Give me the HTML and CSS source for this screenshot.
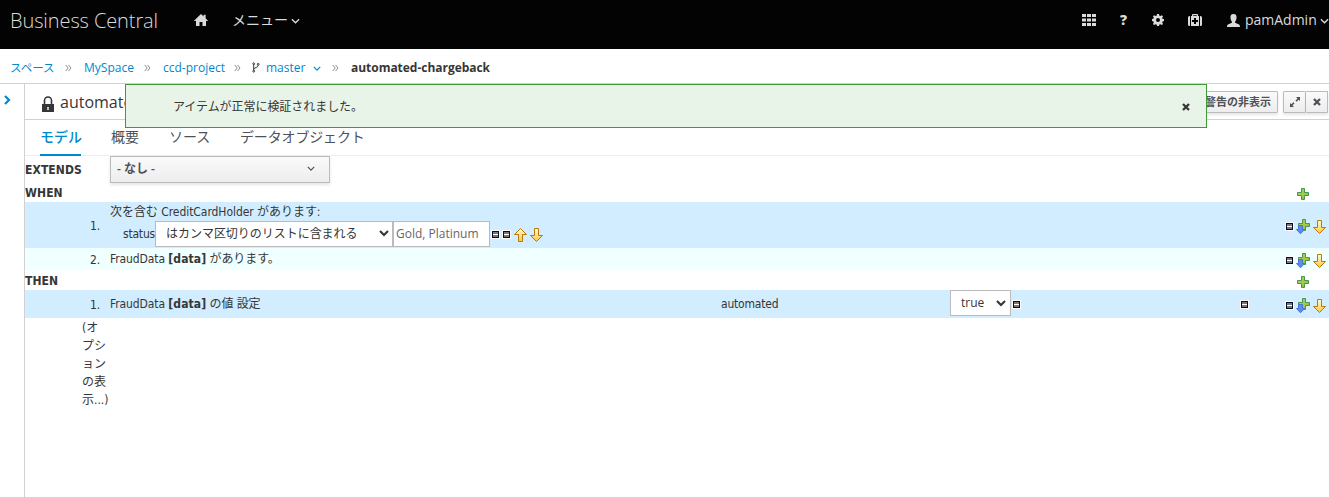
FILE: index.html
```html
<!DOCTYPE html>
<html lang="ja">
<head>
<meta charset="utf-8">
<title>Business Central</title>
<link rel="stylesheet" href="styles.css">
</head>
<body>
<svg class="defs" width="0" height="0">
  <defs>
    <linearGradient id="gold" x1="0" y1="0" x2="0" y2="1"><stop offset="0" stop-color="#fffbd5"/><stop offset="1" stop-color="#ffc83c"/></linearGradient>
    <linearGradient id="green" x1="0" y1="0" x2="1" y2="1"><stop offset="0" stop-color="#a5d264"/><stop offset=".6" stop-color="#a8c83c"/><stop offset="1" stop-color="#4fa95c"/></linearGradient>
  </defs>
  <symbol id="down" viewBox="0 0 14 16"><path d="M4.500 1.500h4v7h4L6.500 14.500.5 8.500h4z" fill="url(#gold)" stroke="#b8790c"/></symbol>
  <symbol id="up" viewBox="0 0 14 16"><path d="M4.500 14.500h4v-7h4L6.500 1.500.5 7.500h4z" fill="url(#gold)" stroke="#b8790c"/></symbol>
  <symbol id="plus" viewBox="0 0 12 12"><path d="M4.500.5h3v4h4v3h-4v4h-3v-4h-4v-3h4z" fill="url(#green)" stroke="#439657"/></symbol>
  <symbol id="insert" viewBox="0 0 14 16"><path d="M6.500 .5h3v4h4v3h-4v4h-3v-4h-4v-3h4z" fill="url(#green)" stroke="#439657"/><path d="M2.500 6.500h4v4h2l-4 4.300-4-4.300h2z" fill="#5c8cf0" stroke="#4a74d0"/></symbol>
  <symbol id="chev" viewBox="0 0 10 6"><path d="M1 1l4 4 4-4" fill="none" stroke="currentColor" stroke-width="1.500"/></symbol>
  <symbol id="caret" viewBox="0 0 10 7"><path d="M1 1l4 4 4-4" fill="none" stroke="currentColor" stroke-width="2.100"/></symbol>
  <symbol id="dbl" viewBox="0 0 7 8"><path d="M.7.9L3.200 4 .7 7.100M3.500.9L6 4 3.500 7.100" fill="none" stroke="#8b8d8f"/></symbol>
  <symbol id="x" viewBox="0 0 8 8"><path d="M1 1l6 6M7 1L1 7" fill="none" stroke="currentColor" stroke-width="2.300"/></symbol>
</svg>

<header class="masthead">
  <span class="brand">Business Central</span>
  <svg class="home" width="14" height="12" viewBox="0 0 14 12"><path d="M7 0l2.600 2.500V.8h2v3.500L14 6.700l-1.100.6L12 6.500V12H8.500V8h-3v4H2V6.500l-.9.8L0 6.700z"/></svg>
  <span class="menu">メニュー</span>
  <svg class="menu-chev" width="9" height="6"><use href="#chev"/></svg>
  <div class="tools">
    <svg class="apps" width="14" height="12" viewBox="0 0 14 12"><path d="M0 0h4v3H0zM5 0h4v3H5zM10 0h4v3h-4zM0 4.500h4v3H0zM5 4.500h4v3H5zM10 4.500h4v3h-4zM0 9h4v3H0zM5 9h4v3H5zM10 9h4v3h-4z"/></svg>
    <span class="help">?</span>
    <svg class="gear" width="12" height="12" viewBox="0 0 12 12"><path fill-rule="evenodd" d="M5 0h2l.4 1.700 1 .4 1.500-.9 1.100 1.200-.8 1.500.4 1L12 5v2l-1.400.5-.4 1 .8 1.400-1.100 1.100-1.500-.8-1 .4L7 12H5l-.4-1.400-1-.4-1.500.8L1 9.900l.8-1.400-.4-1L0 7V5l1.400-.2.4-1L1 2.300l1.100-1.100 1.500.9 1-.4zM6 4a2 2 0 100 4 2 2 0 000-4z"/></svg>
    <svg class="kit" width="14" height="12" viewBox="0 0 14 12"><path fill-rule="evenodd" d="M1.500 2H2v10h-.5Q0 12 0 10.500v-7Q0 2 1.500 2zM12.500 2H12v10h.5q1.500 0 1.500-1.500v-7Q14 2 12.500 2zM3 2h1V.8Q4 0 5 0h4q1 0 1 .8V2h1v10H3zM5.200 1.200V2h3.600v-.8zM6 4v2H4v2h2v2h2V8h2V6H8V4z"/></svg>
    <svg class="user" width="13" height="13" viewBox="0 0 13 13"><path d="M6.500 0C9 0 9.700 1.500 9.500 4c-.1 2-.8 3-1.400 3.700v1l4 1.800q.9.500.9 2.500H0q0-2 .9-2.500l4-1.800v-1C4.300 7 3.600 6 3.500 4 3.300 1.500 4 0 6.500 0z"/></svg>
    <span class="username">pamAdmin</span>
    <svg class="user-chev" width="9" height="6"><use href="#chev"/></svg>
  </div>
</header>

<nav class="crumbs">
  <a class="c1">スペース</a><svg class="sep" width="7" height="8"><use href="#dbl"/></svg>
  <a class="c2">MySpace</a><svg class="sep" width="7" height="8"><use href="#dbl"/></svg>
  <a class="c3">ccd-project</a><svg class="sep" width="7" height="8"><use href="#dbl"/></svg>
  <svg class="fork" width="8" height="11" viewBox="0 0 8 11"><g fill="none" stroke="#363636" stroke-width="1"><circle cx="1.700" cy="1.700" r=".9"/><circle cx="6.200" cy="2.300" r=".9"/><circle cx="1.700" cy="9.200" r=".9"/><path d="M1.700 2.600v5.600M6.200 3.200c0 3-4 1.700-4.500 4.300"/></g></svg>
  <a class="c4">master</a><svg class="branch-chev" width="8" height="5"><use href="#chev"/></svg><svg class="sep" width="7" height="8"><use href="#dbl"/></svg>
  <b class="c5">automated-chargeback</b>
</nav>

<div class="workspace">
  <aside class="rail"><svg width="7" height="10" viewBox="0 0 7 10"><path d="M1 1l4 4-4 4" fill="none" stroke="#0088ce" stroke-width="2.200"/></svg></aside>
  <main class="editor">
    <div class="titlebar">
      <svg class="lock" width="12" height="16" viewBox="0 0 12 16"><path d="M2.500 8V4.500a3.500 3.500 0 017 0V8" fill="none" stroke="#363636" stroke-width="1.600"/><path fill-rule="evenodd" d="M0 8h12v8H0zM5.300 11v3h1.400v-3z" fill="#363636"/></svg>
      <h1>automated</h1>
      <div class="actions">
        <button class="btn warn">警告の非表示</button>
        <div class="pair">
          <button class="btn sq"><svg width="10" height="10" viewBox="0 0 10 10"><path d="M6 0h4v4L8.700 2.700 6.500 4.700l-1-1L7.500 1.500zM4 10H0V6l1.300 1.300 2.200-2 1 1L2.500 8.500z" fill="#4d5258"/></svg></button><button class="btn sq last"><svg width="8" height="8"><use href="#x"/></svg></button>
        </div>
      </div>
    </div>
    <div class="tabs"><span class="tab active">モデル</span><span class="tab t2">概要</span><span class="tab t3">ソース</span><span class="tab t4">データオブジェクト</span></div>

    <div class="rule">
      <div class="extends"><b>EXTENDS</b><div class="picker"><span>- なし -</span><svg width="8" height="5"><use href="#chev"/></svg></div></div>
      <div class="section when"><b>WHEN</b><svg class="add" width="12" height="12"><use href="#plus"/></svg></div>
      <div class="row first">
        <span class="num">1.</span>
        <div class="body">
          <div class="pattern">次を含む <span>CreditCardHolder</span> があります:</div>
          <div class="constraint"><span class="field">status</span><div class="select operator"><span>はカンマ区切りのリストに含まれる</span><svg width="10" height="7"><use href="#caret"/></svg></div><div class="input">Gold, Platinum</div><i class="minus"></i><i class="minus"></i><svg class="arrow" width="14" height="16"><use href="#up"/></svg><svg class="arrow" width="14" height="16"><use href="#down"/></svg></div>
        </div>
        <div class="ops"><i class="minus"></i><svg width="14" height="16"><use href="#insert"/></svg><svg width="14" height="16"><use href="#down"/></svg></div>
      </div>
      <div class="row second">
        <span class="num">2.</span>
        <div class="body">FraudData <b>[data]</b> があります。</div>
        <div class="ops"><i class="minus"></i><svg width="14" height="16"><use href="#insert"/></svg><svg width="14" height="16"><use href="#down"/></svg></div>
      </div>
      <div class="section then"><b>THEN</b><svg class="add" width="12" height="12"><use href="#plus"/></svg></div>
      <div class="row third">
        <span class="num">1.</span>
        <div class="body action"><span class="subject">FraudData <b>[data]</b> の値 設定</span><span class="attr">automated</span><div class="select bool"><span>true</span><svg width="10" height="7"><use href="#caret"/></svg></div><i class="minus"></i></div>
        <i class="minus remove"></i>
        <div class="ops"><i class="minus"></i><svg width="14" height="16"><use href="#insert"/></svg><svg width="14" height="16"><use href="#down"/></svg></div>
      </div>
      <div class="options">(オ<br>プシ<br>ョン<br>の表<br>示...)</div>
    </div>
  </main>
</div>

<div class="toast"><span>アイテムが正常に検証されました。</span><svg width="8" height="8"><use href="#x"/></svg></div>
</body>
</html>
```

FILE: styles.css
```css
* { box-sizing: border-box; }
body { margin: 0; width: 1329px; height: 497px; overflow: hidden; background: #fff; color: #363636; font: 12px/18px "Open Sans", "Noto Sans CJK JP", sans-serif; }
svg { display: block; flex: none; }
.defs { position: absolute; }
span, a, b { white-space: nowrap; }

.masthead { display: flex; align-items: center; height: 49px; padding: 0 0 9px 10px; background: #030303; color: #dbdbdb; fill: #dbdbdb; }
.brand { width: 184px; font-size: 20px; font-weight: 300; line-height: 26px; letter-spacing: -.1px; padding-top: 2px; }
.menu { margin-left: 24px; width: 56px; font-size: 14px; }
.menu-chev { margin-left: 3px; margin-top: 2px; }
.tools { display: flex; align-items: center; margin-left: auto; width: 247px; }
.help { width: 8px; margin-left: 24px; font-size: 14px; font-weight: 800; }
.gear { margin-left: 24px; }
.kit { margin-left: 24px; }
.user { margin-left: 25px; margin-top: 1px; }
.username { width: 74px; margin-left: 5px; font-size: 14px; }
.user-chev { margin-left: 2px; margin-top: 2px; }

.crumbs { display: flex; align-items: center; height: 35px; padding: 3px 0 0 10px; border-bottom: 1px solid #d1d1d1; }
.crumbs a { color: #0088ce; }
.sep { margin: 1px 12px 0 11px; }
.c1 { width: 44px; font-size: 11.500px; }
.c2 { width: 49px; }
.c3 { width: 60px; }
.fork { margin-left: -1px; margin-right: 6px; }
.c4 { width: 39px; }
.branch-chev { margin: 1px 0 0 8px; color: #0088ce; }
.c5 { letter-spacing: -.03px; }

.workspace { display: flex; height: 413px; }
.rail { width: 25px; border-right: 1px solid #d1d1d1; padding: 11px 0 0 4px; }
.editor { flex: 1; }
.titlebar { display: flex; align-items: center; height: 36px; border-bottom: 1px solid #d1d1d1; padding: 0 1px 0 17px; }
.lock { margin-top: 5px; }
h1 { margin: 0 0 0 6px; font-size: 16px; font-weight: 400; line-height: 24px; }
.actions { display: flex; margin-left: auto; }
.btn { display: flex; align-items: center; justify-content: center; height: 22px; padding: 0; border: 1px solid #bbb; border-radius: 1px; background: linear-gradient(#fafafa, #ededed); box-shadow: 0 2px 3px rgba(3,3,3,.1); color: #4d5258; font: 600 11px/18px "Open Sans", "Noto Sans CJK JP", sans-serif; }
.warn { width: 80px; }
.pair { display: flex; margin-left: 5px; }
.sq { width: 23px; }
.last { border-left: 0; width: 22px; }

.tabs { display: flex; height: 36px; padding-left: 15px; border-bottom: 1px solid #ededec; font-size: 14px; line-height: 34px; color: #4d5258; }
.tab { height: 36px; }
.active { width: 41px; border-bottom: 2px solid #0088ce; color: #0088ce; font-weight: 500; }
.t2 { margin-left: 30px; width: 28px; }
.t3 { margin-left: 30px; width: 42px; }
.t4 { margin-left: 29px; letter-spacing: -.15px; }

.rule { font-family: "DejaVu Sans Condensed", "Noto Sans CJK JP", sans-serif; font-size: 12px; letter-spacing: -.1px; }
.rule b { letter-spacing: .1px; }
.extends { display: flex; height: 27px; }
.extends b { width: 85px; line-height: 29px; }
.picker, .select, .input { font-family: "Open Sans", "Noto Sans CJK JP", sans-serif; letter-spacing: 0; }
.picker { display: flex; align-items: center; justify-content: space-between; width: 220px; height: 27px; padding: 0 14px 2px 6px; border: 1px solid #bbb; background: linear-gradient(#fafafa, #ededed); box-shadow: 0 2px 3px rgba(3,3,3,.1); font-weight: 600; color: #4d5258; }
.section { display: flex; align-items: center; justify-content: space-between; padding-right: 20px; height: 20px; }
.when { height: 19px; }
.then b { padding-top: 2px; }
.add { margin-top: 3px; }
.row { display: flex; align-items: center; background: #d1edff; }
.first { height: 46px; }
.second { height: 22px; background: #f0ffff; }
.third { height: 28px; }
.num { width: 85px; padding-right: 10px; text-align: right; padding-top: 2px; }
.body { flex: 1; }
.pattern { margin-top: -1px; height: 18px; letter-spacing: -.05px; }
.constraint { display: flex; align-items: center; padding-left: 13px; height: 26px; }
.field { width: 32px; letter-spacing: -.2px; }
.select { display: flex; align-items: center; justify-content: space-between; height: 26px; border: 1px solid #bbb; background: #fff; color: #363636; }
.operator { width: 238px; padding: 0 3px 0 10px; }
.operator span { letter-spacing: -.03px; }
.input { width: 97px; height: 26px; padding: 3px 2px; border: 1px solid #bbb; background: #fff; color: #666; }
.minus { display: block; flex: none; width: 7px; height: 7px; border: 1px solid #0a0a20; background: linear-gradient(#777 0 2px, #fff 2px 3px, #777 3px); outline: 1px solid #fff; }
.input + .minus { margin-left: 2px; }
.constraint .minus { margin-top: 2px; }
.constraint .minus + .minus { margin-left: 4px; }
.arrow { margin-left: 2px; margin-top: 2px; }
.minus + .arrow { margin-left: 4px; }
.ops { display: flex; align-items: center; width: 43px; padding-top: 3px; }
.ops svg { margin-left: 3px; }
.ops svg:last-child { margin-left: 3px; }
.action { display: flex; align-items: center; }
.subject { width: 611px; }
.attr { width: 229px; letter-spacing: -.2px; }
.bool { width: 61px; padding: 0 4px 0 10px; position: relative; top: -1px; }
.bool + .minus { margin-left: 2px; }
.remove { margin-right: 38px; }
.options { width: 28px; margin-left: 57px; padding-top: 1px; line-height: 18px; letter-spacing: 0; }

.toast { position: absolute; left: 125px; top: 84px; width: 1082px; height: 44px; display: flex; align-items: center; justify-content: space-between; padding: 1px 16px 0 47px; border: 1px solid #3f9c35; background: #e9f4e9; letter-spacing: -.05px; }
```
